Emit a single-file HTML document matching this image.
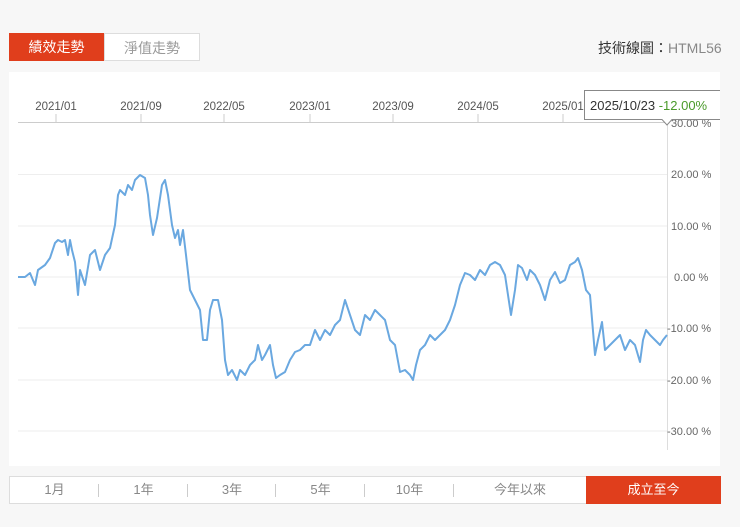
<!DOCTYPE html>
<html><head><meta charset="utf-8"><style>
body{margin:0;width:740px;height:527px;background:#f7f7f7;font-family:"Liberation Sans","Noto Sans CJK TC",sans-serif;position:relative;overflow:hidden}
.tab{position:absolute;top:33px;height:28px;line-height:28px;text-align:center;font-size:14px;box-sizing:border-box}
.panel{position:absolute;left:9px;top:72px;width:711px;height:394px;background:#fff}
.bar{position:absolute;left:9px;top:476px;width:711px;height:28px;background:#fff;border:1px solid #ddd;box-sizing:border-box;font-size:13px;color:#888}
.bar div{position:absolute;top:0;text-align:center;line-height:26px}
.sep:after{content:"";position:absolute;right:0;top:7px;height:13px;border-right:1px solid #ccc}
</style></head><body>
<div class="tab" style="left:9px;width:95px;background:#e03e1c;color:#fff">績效走勢</div>
<div class="tab" style="left:104px;width:96px;background:#fff;border:1px solid #ddd;color:#999">淨值走勢</div>
<div style="position:absolute;left:598px;top:38px;font-size:14px;color:#333">技術線圖：<span style="color:#888">HTML56</span></div>
<div class="panel"></div>
<svg style="position:absolute;left:0;top:0" width="740" height="527">
<g font-size="11.5" fill="#555" font-family="Liberation Sans,sans-serif" text-anchor="middle">
<text x="56" y="110">2021/01</text><text x="141" y="110">2021/09</text><text x="224" y="110">2022/05</text><text x="310" y="110">2023/01</text><text x="393" y="110">2023/09</text><text x="478" y="110">2024/05</text><text x="563" y="110">2025/01</text>
</g>
<g stroke="#ccc"><line x1="56" y1="114" x2="56" y2="122"/><line x1="141" y1="114" x2="141" y2="122"/><line x1="224" y1="114" x2="224" y2="122"/><line x1="310" y1="114" x2="310" y2="122"/><line x1="393" y1="114" x2="393" y2="122"/><line x1="478" y1="114" x2="478" y2="122"/><line x1="563" y1="114" x2="563" y2="122"/></g>
<line x1="18" y1="122.5" x2="667" y2="122.5" stroke="#ccc"/>
<g stroke="#eee"><line x1="18" y1="174.5" x2="667" y2="174.5"/><line x1="18" y1="226" x2="667" y2="226"/><line x1="18" y1="277" x2="667" y2="277"/><line x1="18" y1="328" x2="667" y2="328"/><line x1="18" y1="380" x2="667" y2="380"/><line x1="18" y1="431" x2="667" y2="431"/></g>
<line x1="667.5" y1="122" x2="667.5" y2="450" stroke="#ddd"/>
<g font-size="11" fill="#666" font-family="Liberation Sans,sans-serif">
<text x="671" y="127">30.00 %</text><text x="671" y="178">20.00 %</text><text x="671" y="230">10.00 %</text><text x="674" y="281">0.00 %</text><text x="667" y="332">-10.00 %</text><text x="667" y="384">-20.00 %</text><text x="667" y="435">-30.00 %</text>
</g>
<polyline fill="none" stroke="#6aa8e0" stroke-width="2" stroke-linejoin="round" points="18,277 25,277 30,273 35,285 38,270 45,265 50,258 55,243 58,240 62,242 65,240 68,255 70,240 72,250 75,262 78,295 80,270 85,285 90,255 95,250 100,270 105,255 110,248 115,225 118,195 120,190 125,195 128,185 132,190 135,180 140,175 145,178 148,195 150,215 153,235 157,218 162,185 165,180 168,195 172,225 175,238 178,230 180,245 183,230 186,255 190,290 195,300 200,310 203,340 207,340 210,310 213,300 218,300 222,320 225,360 228,375 232,370 237,380 240,370 245,375 250,365 255,360 258,345 262,360 265,355 270,345 273,365 276,378 280,375 285,372 290,360 295,352 300,350 305,345 310,345 315,330 320,340 325,330 330,335 335,325 340,320 345,300 350,315 355,330 360,335 365,315 370,320 375,310 380,315 385,320 390,340 395,345 400,372 405,370 410,375 413,380 416,365 420,350 425,345 430,335 435,340 440,335 445,330 450,320 455,305 460,285 465,273 470,275 475,280 480,270 485,275 490,265 495,262 500,265 505,275 508,295 511,315 515,290 518,265 522,268 527,280 530,270 535,275 540,285 545,300 550,280 555,272 560,283 565,280 570,265 575,262 578,258 582,270 586,290 590,295 595,355 598,340 602,322 605,350 610,345 615,340 620,335 625,350 630,340 635,345 640,362 643,340 646,330 650,335 655,340 660,345 663,340 667,335"/>
<path d="M584.5,90.5 H730 V119.5 H672 L667,125 L662,119.5 H584.5 Z" fill="#fff" stroke="#888"/>
<text x="590" y="110" font-size="13" fill="#333" font-family="Liberation Sans,sans-serif">2025/10/23 <tspan fill="#4a9a2a">-12.00%</tspan></text>
<rect x="720" y="85" width="20" height="40" fill="#f7f7f7"/>
</svg>
<div class="bar">
<div class="sep" style="left:0;width:89px">1月</div>
<div class="sep" style="left:89px;width:89px">1年</div>
<div class="sep" style="left:178px;width:88px">3年</div>
<div class="sep" style="left:266px;width:89px">5年</div>
<div class="sep" style="left:355px;width:89px">10年</div>
<div style="left:444px;width:132px">今年以來</div>
<div style="left:576px;width:135px;top:-1px;height:28px;line-height:28px;background:#e03e1c;color:#fff">成立至今</div>
</div>
</body></html>
